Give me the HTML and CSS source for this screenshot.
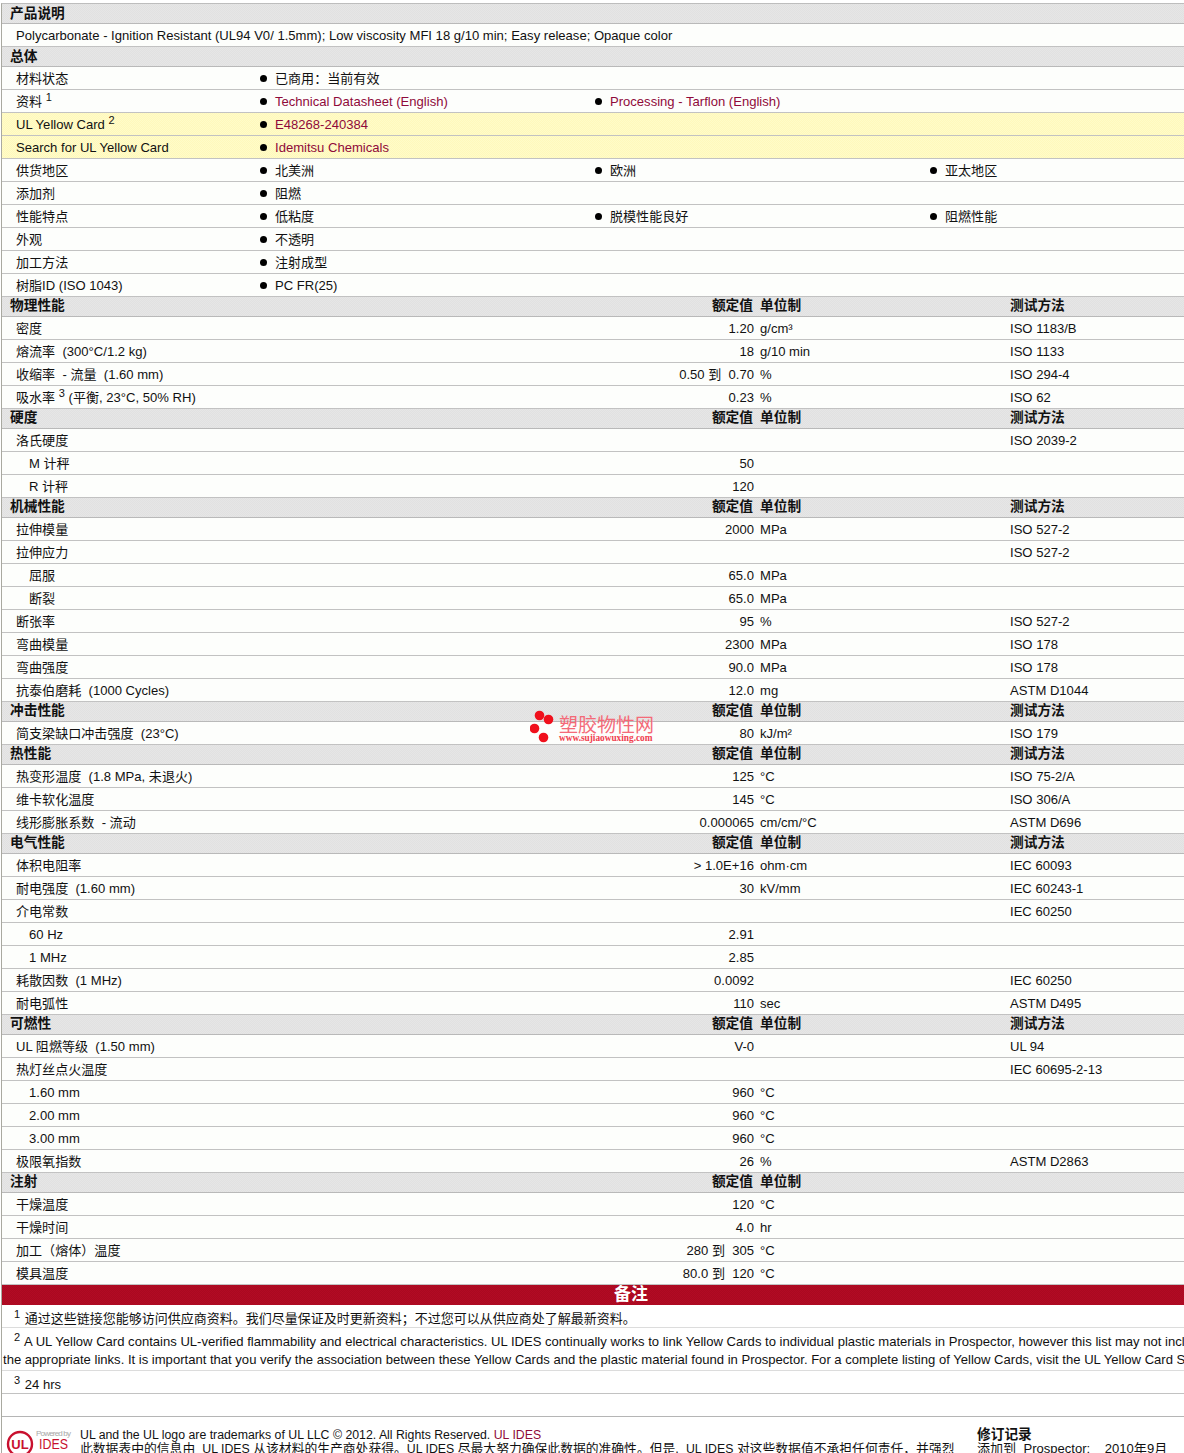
FILE: index.html
```html
<!DOCTYPE html>
<html lang="zh-CN">
<head>
<meta charset="utf-8">
<title>Polycarbonate datasheet</title>
<link rel="stylesheet" href="styles.css">
</head>
<body>
<main class="sheet">
  <div class="head single"><b>产品说明</b></div>
  <div class="row text-row">Polycarbonate - Ignition Resistant (UL94 V0/ 1.5mm); Low viscosity MFI 18 g/10 min; Easy release; Opaque color</div>
  <div class="head single"><b>总体</b></div>

  <div class="row over"><span class="name">材料状态</span><span class="it">已商用：当前有效</span></div>
  <div class="row over"><span class="name">资料 <sup>1</sup></span><a class="it link">Technical Datasheet (English)</a><a class="it link">Processing - Tarflon (English)</a></div>
  <div class="row over yellow"><span class="name">UL Yellow Card <sup>2</sup></span><a class="it link">E48268-240384</a></div>
  <div class="row over yellow"><span class="name">Search for UL Yellow Card</span><a class="it link">Idemitsu Chemicals</a></div>
  <div class="row over"><span class="name">供货地区</span><span class="it">北美洲</span><span class="it">欧洲</span><span class="it">亚太地区</span></div>
  <div class="row over"><span class="name">添加剂</span><span class="it">阻燃</span></div>
  <div class="row over"><span class="name">性能特点</span><span class="it">低粘度</span><span class="it">脱模性能良好</span><span class="it">阻燃性能</span></div>
  <div class="row over"><span class="name">外观</span><span class="it">不透明</span></div>
  <div class="row over"><span class="name">加工方法</span><span class="it">注射成型</span></div>
  <div class="row over"><span class="name">树脂ID (ISO 1043)</span><span class="it">PC FR(25)</span></div>

  <div class="head prop"><b>物理性能</b><b class="val">额定值</b><b class="unit">单位制</b><b>测试方法</b></div>
  <div class="row prop"><span class="name">密度</span><span class="val">1.20</span><span class="unit">g/cm³</span><span>ISO 1183/B</span></div>
  <div class="row prop"><span class="name">熔流率&nbsp; (300°C/1.2 kg)</span><span class="val">18</span><span class="unit">g/10 min</span><span>ISO 1133</span></div>
  <div class="row prop"><span class="name">收缩率&nbsp; - 流量&nbsp; (1.60 mm)</span><span class="val">0.50 到&nbsp; 0.70</span><span class="unit">%</span><span>ISO 294-4</span></div>
  <div class="row prop"><span class="name">吸水率 <sup>3</sup> (平衡, 23°C, 50% RH)</span><span class="val">0.23</span><span class="unit">%</span><span>ISO 62</span></div>

  <div class="head prop"><b>硬度</b><b class="val">额定值</b><b class="unit">单位制</b><b>测试方法</b></div>
  <div class="row prop"><span class="name">洛氏硬度</span><span class="val"></span><span class="unit"></span><span>ISO 2039-2</span></div>
  <div class="row prop"><span class="name sub">M 计秤</span><span class="val">50</span><span class="unit"></span><span></span></div>
  <div class="row prop"><span class="name sub">R 计秤</span><span class="val">120</span><span class="unit"></span><span></span></div>

  <div class="head prop"><b>机械性能</b><b class="val">额定值</b><b class="unit">单位制</b><b>测试方法</b></div>
  <div class="row prop"><span class="name">拉伸模量</span><span class="val">2000</span><span class="unit">MPa</span><span>ISO 527-2</span></div>
  <div class="row prop"><span class="name">拉伸应力</span><span class="val"></span><span class="unit"></span><span>ISO 527-2</span></div>
  <div class="row prop"><span class="name sub">屈服</span><span class="val">65.0</span><span class="unit">MPa</span><span></span></div>
  <div class="row prop"><span class="name sub">断裂</span><span class="val">65.0</span><span class="unit">MPa</span><span></span></div>
  <div class="row prop"><span class="name">断张率</span><span class="val">95</span><span class="unit">%</span><span>ISO 527-2</span></div>
  <div class="row prop"><span class="name">弯曲模量</span><span class="val">2300</span><span class="unit">MPa</span><span>ISO 178</span></div>
  <div class="row prop"><span class="name">弯曲强度</span><span class="val">90.0</span><span class="unit">MPa</span><span>ISO 178</span></div>
  <div class="row prop"><span class="name">抗泰伯磨耗&nbsp; (1000 Cycles)</span><span class="val">12.0</span><span class="unit">mg</span><span>ASTM D1044</span></div>

  <div class="head prop"><b>冲击性能</b><b class="val">额定值</b><b class="unit">单位制</b><b>测试方法</b></div>
  <div class="row prop"><span class="name">简支梁缺口冲击强度&nbsp; (23°C)</span><span class="val">80</span><span class="unit">kJ/m²</span><span>ISO 179</span></div>

  <div class="head prop"><b>热性能</b><b class="val">额定值</b><b class="unit">单位制</b><b>测试方法</b></div>
  <div class="row prop"><span class="name">热变形温度&nbsp; (1.8 MPa, 未退火)</span><span class="val">125</span><span class="unit">°C</span><span>ISO 75-2/A</span></div>
  <div class="row prop"><span class="name">维卡软化温度</span><span class="val">145</span><span class="unit">°C</span><span>ISO 306/A</span></div>
  <div class="row prop"><span class="name">线形膨胀系数&nbsp; - 流动</span><span class="val">0.000065</span><span class="unit">cm/cm/°C</span><span>ASTM D696</span></div>

  <div class="head prop"><b>电气性能</b><b class="val">额定值</b><b class="unit">单位制</b><b>测试方法</b></div>
  <div class="row prop"><span class="name">体积电阻率</span><span class="val">&gt; 1.0E+16</span><span class="unit">ohm·cm</span><span>IEC 60093</span></div>
  <div class="row prop"><span class="name">耐电强度&nbsp; (1.60 mm)</span><span class="val">30</span><span class="unit">kV/mm</span><span>IEC 60243-1</span></div>
  <div class="row prop"><span class="name">介电常数</span><span class="val"></span><span class="unit"></span><span>IEC 60250</span></div>
  <div class="row prop"><span class="name sub">60 Hz</span><span class="val">2.91</span><span class="unit"></span><span></span></div>
  <div class="row prop"><span class="name sub">1 MHz</span><span class="val">2.85</span><span class="unit"></span><span></span></div>
  <div class="row prop"><span class="name">耗散因数&nbsp; (1 MHz)</span><span class="val">0.0092</span><span class="unit"></span><span>IEC 60250</span></div>
  <div class="row prop"><span class="name">耐电弧性</span><span class="val">110</span><span class="unit">sec</span><span>ASTM D495</span></div>

  <div class="head prop"><b>可燃性</b><b class="val">额定值</b><b class="unit">单位制</b><b>测试方法</b></div>
  <div class="row prop"><span class="name">UL 阻燃等级&nbsp; (1.50 mm)</span><span class="val">V-0</span><span class="unit"></span><span>UL 94</span></div>
  <div class="row prop"><span class="name">热灯丝点火温度</span><span class="val"></span><span class="unit"></span><span>IEC 60695-2-13</span></div>
  <div class="row prop"><span class="name sub">1.60 mm</span><span class="val">960</span><span class="unit">°C</span><span></span></div>
  <div class="row prop"><span class="name sub">2.00 mm</span><span class="val">960</span><span class="unit">°C</span><span></span></div>
  <div class="row prop"><span class="name sub">3.00 mm</span><span class="val">960</span><span class="unit">°C</span><span></span></div>
  <div class="row prop"><span class="name">极限氧指数</span><span class="val">26</span><span class="unit">%</span><span>ASTM D2863</span></div>

  <div class="head prop"><b>注射</b><b class="val">额定值</b><b class="unit">单位制</b><b></b></div>
  <div class="row prop"><span class="name">干燥温度</span><span class="val">120</span><span class="unit">°C</span><span></span></div>
  <div class="row prop"><span class="name">干燥时间</span><span class="val">4.0</span><span class="unit">hr</span><span></span></div>
  <div class="row prop"><span class="name">加工（熔体）温度</span><span class="val">280 到&nbsp; 305</span><span class="unit">°C</span><span></span></div>
  <div class="row prop"><span class="name">模具温度</span><span class="val">80.0 到&nbsp; 120</span><span class="unit">°C</span><span></span></div>

  <div class="notes-title"><b>备注</b></div>
  <div class="note note-one"><sup>1</sup> 通过这些链接您能够访问供应商资料。我们尽量保证及时更新资料；不过您可以从供应商处了解最新资料。</div>
  <div class="note note-two"><sup>2</sup> A UL Yellow Card contains UL-verified flammability and electrical characteristics. UL IDES continually works to link Yellow Cards to individual plastic materials in Prospector, however this list may not include all of<br><span class="wrap">the appropriate links. It is important that you verify the association between these Yellow Cards and the plastic material found in Prospector. For a complete listing of Yellow Cards, visit the UL Yellow Card Search.</span></div>
  <div class="note note-three"><sup>3</sup> 24 hrs</div>
  <div class="note-empty"></div>

  <footer class="foot">
    <svg class="logo" width="70" height="28" viewBox="0 0 70 28" aria-label="UL IDES">
      <circle cx="18" cy="19" r="12" fill="none" stroke="#c8102e" stroke-width="2.4"/>
      <text x="18" y="24" class="logo-ul">UL</text>
      <text x="34" y="11" class="logo-by" textLength="35">Powered by</text>
      <text x="37" y="23.5" class="logo-ides" textLength="29" lengthAdjust="spacingAndGlyphs">IDES</text>
    </svg>
    <div class="legal">
      <div class="legal-first">UL and the UL logo are trademarks of UL LLC © 2012. All Rights Reserved. <a class="link">UL IDES</a></div>
      <div class="legal-second">此数据表中的信息由&nbsp; <span class="latin">UL IDES</span> 从该材料的生产商处获得。<span class="latin">UL IDES</span> 尽最大努力确保此数据的准确性。但是,&nbsp; <span class="latin">UL IDES</span> 对这些数据值不承担任何责任，并强烈</div>
    </div>
    <div class="revision">
      <b>修订记录</b>
      <div>添加到&nbsp; Prospector:&nbsp;&nbsp;&nbsp; 2010年9月</div>
    </div>
  </footer>
</main>

<div class="mark">
  <svg class="mark-dots" width="26" height="34" viewBox="0 0 26 34">
    <circle cx="9.5" cy="5.5" r="4.8" fill="#f0101c"/>
    <circle cx="18.5" cy="9.5" r="4.8" fill="#f0101c"/>
    <circle cx="4.5" cy="18.5" r="4.8" fill="#f0101c"/>
    <circle cx="13.5" cy="27.5" r="4.8" fill="#f0101c"/>
  </svg>
  <div class="mark-text">
    <div class="mark-cn">塑胶物性网</div>
    <div class="mark-url">www.sujiaowuxing.com</div>
  </div>
</div>
</body>
</html>
```
FILE: styles.css
```css
* { box-sizing: border-box; }
html, body { margin: 0; height: 1453px; overflow: hidden; background: #fff; }
body {
  font-family: "Liberation Sans", "Noto Sans CJK SC", sans-serif;
  font-size: 13.07px;
  color: #111;
  position: relative;
}
.sheet {
  width: 1400px;
  margin: 3px 0 0 1px;
  border-left: 1px solid #a9a9a0;
  border-top: 1px solid #bdbdbd;
}
sup { font-size: 11px; line-height: 0; vertical-align: 5px; }
b { font-weight: 700; }
.link { color: #8f0a3a; }

.head {
  height: 20px;
  line-height: 17px;
  font-size: 13.7px;
  border-bottom: 1px solid #b9b9b9;
  background: repeating-conic-gradient(#e6e6e6 0 25%, #e1e1e1 0 50%) 0 0 / 2px 2px;
}
.head.single { padding-left: 8px; line-height: 19px; }
.head .val { padding-right: 1px; }
.row {
  height: 23px;
  line-height: 24px;
  border-bottom: 1px solid #c2c2c2;
  background: #fdfefc;
  white-space: nowrap;
}
.text-row { padding-left: 14px; }

.over { display: grid; grid-template-columns: 258px 335px 335px 335px; }
.name { padding-left: 14px; }
.sub { padding-left: 27px; }
.it { display: flex; align-items: flex-start; height: 22px; }
.it::before {
  content: "";
  width: 7px;
  height: 7px;
  border-radius: 50%;
  background: #000;
  margin: 7.5px 8px 0 0;
  flex: none;
}
.yellow { background: repeating-conic-gradient(#fffcc8 0 25%, #fff8bc 0 50%) 0 0 / 2px 2px; }

.prop { display: grid; grid-template-columns: 500px 252px 256px 1fr; }
.head.prop > :first-child { padding-left: 8px; }
.val { text-align: right; }
.unit { padding-left: 6px; }

.notes-title {
  height: 20px;
  line-height: 19px;
  padding-left: 612px;
  font-size: 17px;
  color: #fff;
  background: repeating-conic-gradient(#b30a24 0 25%, #a90a20 0 50%) 0 0 / 2px 2px;
}
.note { white-space: nowrap; border-bottom: 1px solid #dcdcdc; padding-left: 12px; }
.note sup { margin-right: 1px; }
.note-one { height: 23px; line-height: 27px; font-size: 13px; }
.note-two { height: 43px; line-height: 18px; padding-top: 5px; }
.note-three { height: 23px; line-height: 27px; border-bottom-color: #c2c2c2; }
.wrap { margin-left: -11px; }
.note-empty { height: 23px; border-bottom: 1px solid #b5b5b5; }

.foot { display: flex; padding-top: 11px; line-height: 14px; }
.logo { flex: none; margin: -3px 8px 0 0; display: block; }
.logo-ul { font: 700 13px "Liberation Sans", sans-serif; fill: #c8102e; text-anchor: middle; }
.logo-by { font: 8px "Liberation Sans", sans-serif; fill: #a8a8a8; }
.logo-ides { font: 14px "Liberation Sans", sans-serif; fill: #c8102e; }
.legal { width: 897px; white-space: nowrap; }
.legal-first { font-size: 12.3px; }
.legal-second { font-size: 12.8px; }
.latin { font-size: 12.3px; }
.revision { white-space: nowrap; }
.revision b { font-size: 13.7px; }

.mark {
  position: absolute;
  left: 530px;
  top: 710px;
  display: flex;
  gap: 3px;
}
.mark-dots { display: block; flex: none; }
.mark-text { padding-top: 3px; }
.mark-cn { font: 19px/21px "Noto Sans CJK SC", sans-serif; color: #f46a78; white-space: nowrap; }
.mark-url { font: 700 9.3px/9px "Liberation Serif", serif; color: #f0404e; white-space: nowrap; }
```
